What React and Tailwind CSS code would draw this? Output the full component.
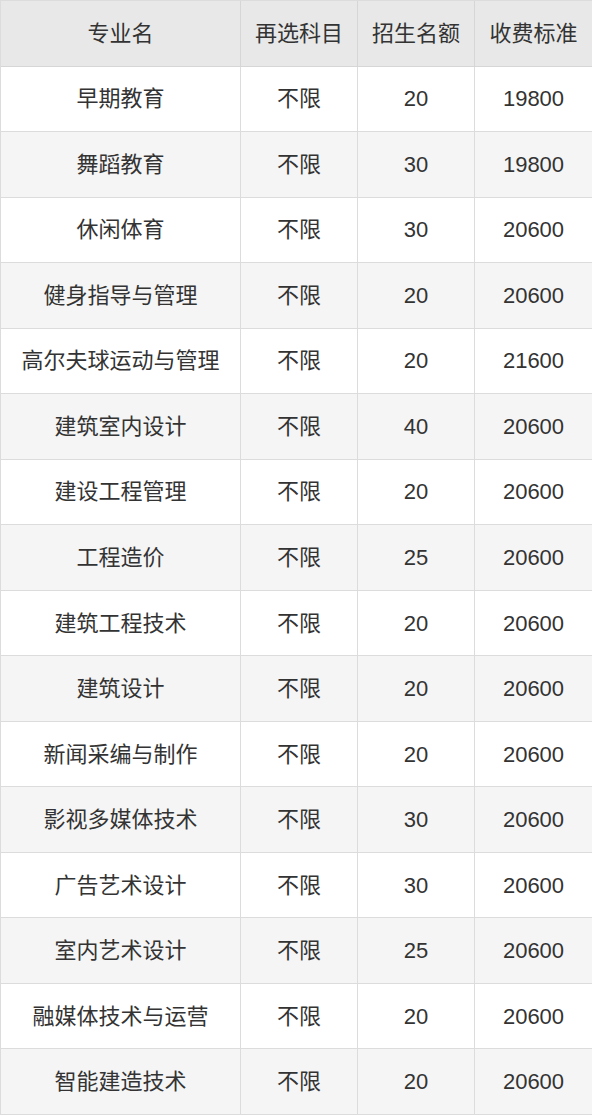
const rows = [
  ["早期教育", "不限", "20", "19800"],
  ["舞蹈教育", "不限", "30", "19800"],
  ["休闲体育", "不限", "30", "20600"],
  ["健身指导与管理", "不限", "20", "20600"],
  ["高尔夫球运动与管理", "不限", "20", "21600"],
  ["建筑室内设计", "不限", "40", "20600"],
  ["建设工程管理", "不限", "20", "20600"],
  ["工程造价", "不限", "25", "20600"],
  ["建筑工程技术", "不限", "20", "20600"],
  ["建筑设计", "不限", "20", "20600"],
  ["新闻采编与制作", "不限", "20", "20600"],
  ["影视多媒体技术", "不限", "30", "20600"],
  ["广告艺术设计", "不限", "30", "20600"],
  ["室内艺术设计", "不限", "25", "20600"],
  ["融媒体技术与运营", "不限", "20", "20600"],
  ["智能建造技术", "不限", "20", "20600"],
];

const header = ["专业名", "再选科目", "招生名额", "收费标准"];

export default function App() {
  return (
    <div
      className="w-[592px] h-[1116px] bg-white text-[#333333] text-[22px]"
      style={{ fontFamily: '"Liberation Sans", "Noto Sans CJK SC", sans-serif' }}
    >
      <div className="grid grid-cols-[240px_117px_117px_118px] grid-rows-[repeat(17,minmax(0,1fr))] h-[1115px] border-t border-l border-[#dcdcdc]">
        {header.map((h, i) => (
          <div
            key={"h" + i}
            className="flex items-center justify-center bg-[#e8e8e8] border-r border-b border-[#d6d6d6]"
          >
            {h}
          </div>
        ))}
        {rows.map((r, ri) =>
          r.map((c, ci) => (
            <div
              key={ri + "-" + ci}
              className={
                "flex items-center justify-center border-r border-b border-[#dcdcdc] " +
                (ri % 2 === 1 ? "bg-[#f5f5f5]" : "bg-white")
              }
            >
              {c}
            </div>
          ))
        )}
      </div>
    </div>
  );
}
